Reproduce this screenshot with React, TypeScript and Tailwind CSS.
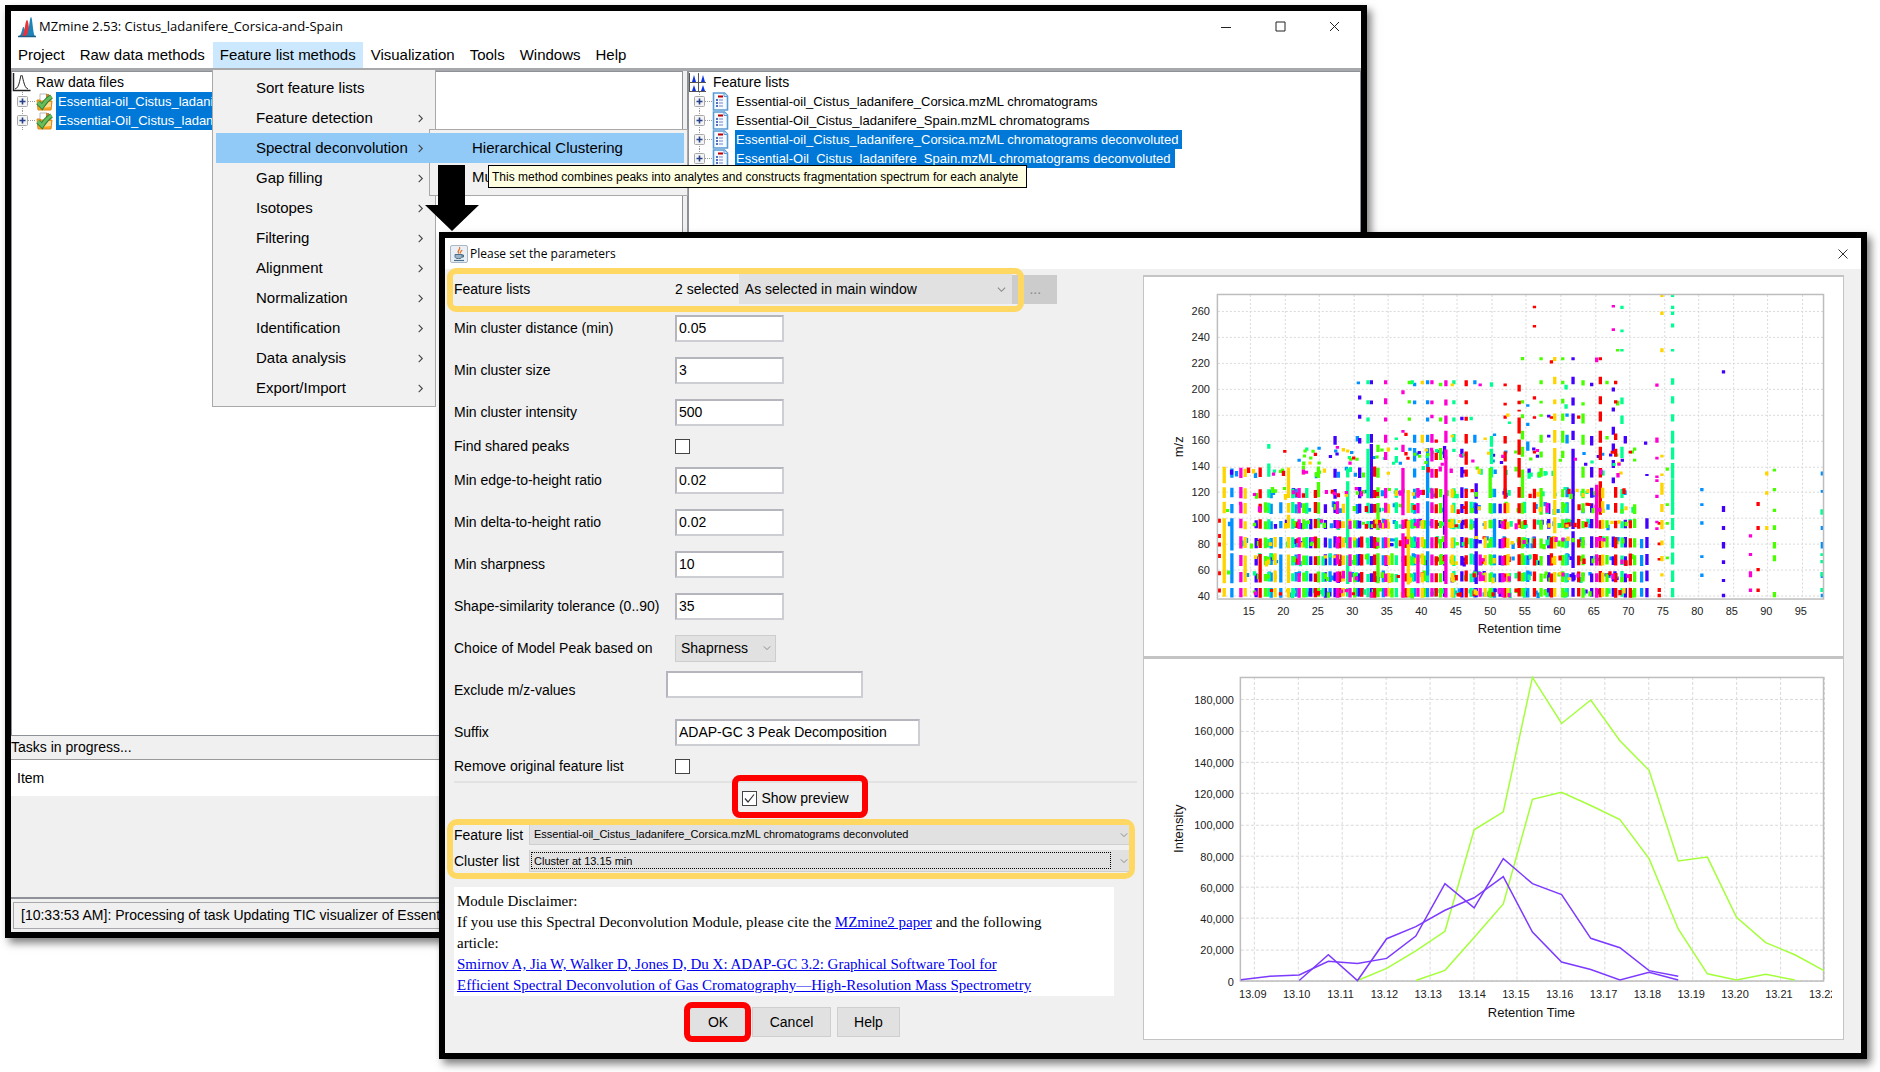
import React from "react";

/* ---------- shared bits ---------- */

const Chevron = ({ className = "" }: { className?: string }) => (
  <svg viewBox="0 0 10 10" className={className} fill="none" stroke="currentColor" strokeWidth="1.2" aria-hidden="true">
    <path d="M1 3l4 4 4-4" />
  </svg>
);

const Expander = () => (
  <svg width="20" height="19" viewBox="0 0 20 19" aria-hidden="true" className="shrink-0">
    <path d="M7.5 0v19M13 9.5h7" stroke="#9a9a9a" strokeDasharray="1 1" />
    <rect x="2.5" y="4.5" width="10" height="10" rx="1" fill="#f4f4f4" stroke="#a8a8a8" />
    <path d="M4.5 9.5h6M7.5 6.5v6" stroke="#27408b" strokeWidth="1.6" />
  </svg>
);

const RawFileIcon = () => (
  <svg width="19" height="18" viewBox="0 0 19 18" aria-hidden="true" className="shrink-0">
    <path d="M5 1h7l3 3v7H5z" fill="#fff" stroke="#b9b9b9" />
    <path d="M11 1h3v4h-3z" fill="#c9863a" />
    <path d="M2 7h3l1 1h11l-1 9H3z" fill="#f6a623" stroke="#d98a1e" />
    <path d="M4 9h12v5l-11 1z" fill="#ffd98a" />
    <path d="M3 9.500l4 4c2.500-4 5.500-7.500 9.500-10" fill="none" stroke="#2e7d32" strokeWidth="5" />
    <path d="M3 9.500l4 4c2.500-4 5.500-7.500 9.500-10" fill="none" stroke="#66bb5a" strokeWidth="3.200" />
  </svg>
);

const ListIcon = () => (
  <svg width="17" height="19" viewBox="0 0 17 19" aria-hidden="true" className="shrink-0">
    <path d="M1.500 1h11l3 3v14h-14z" fill="#f5faff" stroke="#5b9bd5" strokeWidth="1.600" />
    <path d="M12 1v3.500h3.500" fill="#d6e8fa" stroke="#5b9bd5" />
    <path d="M6 4.500h5" stroke="#c00000" strokeWidth="2" />
    <path d="M4 8h2M4 11h2M4 14h2" stroke="#1f3fa8" strokeWidth="1.600" />
    <path d="M7 8h4M7 11h4M7 14h4" stroke="#6f86c9" strokeWidth="1.200" />
  </svg>
);

/* ---------- main window ---------- */

const MENUS = ["Project", "Raw data methods", "Feature list methods", "Visualization", "Tools", "Windows", "Help"];

const METHODS = [
  "Sort feature lists",
  "Feature detection",
  "Spectral deconvolution",
  "Gap filling",
  "Isotopes",
  "Filtering",
  "Alignment",
  "Normalization",
  "Identification",
  "Data analysis",
  "Export/Import",
];

const RAW_FILES = ["Essential-oil_Cistus_ladanifere_Corsica.mzML", "Essential-Oil_Cistus_ladanifere_Spain.mzML"];

const FEATURE_LISTS = [
  { name: "Essential-oil_Cistus_ladanifere_Corsica.mzML chromatograms", selected: false },
  { name: "Essential-Oil_Cistus_ladanifere_Spain.mzML chromatograms", selected: false },
  { name: "Essential-oil_Cistus_ladanifere_Corsica.mzML chromatograms deconvoluted", selected: true },
  { name: "Essential-Oil_Cistus_ladanifere_Spain.mzML chromatograms deconvoluted", selected: true },
];

function MethodsMenu() {
  return (
    <div className="absolute left-[201px] top-[58px] z-10 w-[224px] border border-[#a9a9a9] bg-[#f1f1f1] pt-[3px] pb-[3px] text-[15px]">
      {METHODS.map((m) => {
        const active = m === "Spectral deconvolution";
        return (
          <div key={m} className={active ? "relative h-[30px] bg-[#91c9f7] ml-[3px]" : "relative h-[30px] ml-[3px]"}>
            <button type="button" className="flex h-full w-full items-center justify-between pl-[40px] pr-[10px] text-left">
              {m}
              {m !== "Sort feature lists" && <Chevron className="size-[9px] -rotate-90 text-[#444]" />}
            </button>
            {active && (
              <div className="absolute left-[213px] -top-[4px] w-[259px] border border-[#a9a9a9] bg-[#f1f1f1] py-[3px]">
                <div className="-ml-[2px] mr-[3px]">
                  <button type="button" className="flex h-[30px] w-full items-center bg-[#91c9f7] pl-[44px]">
                    Hierarchical Clustering
                  </button>
                  <button type="button" className="flex h-[29px] w-full items-center pl-[44px]">
                    <span className="w-[18px] overflow-hidden text-left">Multivariate</span>
                  </button>
                </div>
              </div>
            )}
          </div>
        );
      })}
    </div>
  );
}

function MainWindow() {
  return (
    <section
      aria-label="MZmine"
      className="absolute top-[5px] right-[513px] bottom-[134px] left-[5px] flex flex-col border-[6px] border-black bg-[#f0f0f0] shadow-[4px_5px_8px_rgba(0,0,0,0.5)]"
    >
      <header className="flex h-[31px] shrink-0 items-center bg-white pl-[7px]">
        <svg width="18" height="22" viewBox="0 0 18 22" aria-hidden="true">
          <path d="M1 20c3-1 3-9 4.500-9S7 19 9 20z" fill="#2c7fb5" />
          <path d="M4 20c3-1 3-16 5-16s2 15 4 16z" fill="#e8333a" />
          <path d="M8 20c3-1 3.500-19 5-19s2 18 4 19z" fill="#1b84b8" />
          <path d="M0 20.500h18" stroke="#1d5d86" strokeWidth="1.500" />
        </svg>
        <h1 className="ml-[3px] font-['Open_Sans','Noto_Sans',sans-serif] text-[13px]">MZmine 2.53: Cistus_ladanifere_Corsica-and-Spain</h1>
        <div className="ml-auto flex text-[#222]">
          <button type="button" aria-label="Minimize" className="grid h-[30px] w-[54px] place-items-center">
            <svg width="10" height="10" stroke="currentColor"><path d="M0 5.500h10" /></svg>
          </button>
          <button type="button" aria-label="Maximize" className="grid h-[30px] w-[54px] place-items-center">
            <svg width="11" height="11" stroke="currentColor" fill="none"><path d="M1 1h9v9H1z" /></svg>
          </button>
          <button type="button" aria-label="Close" className="grid h-[30px] w-[54px] place-items-center">
            <svg width="11" height="11" stroke="currentColor"><path d="M1 1l9 9M10 1l-9 9" /></svg>
          </button>
        </div>
      </header>

      <nav className="flex h-[26px] shrink-0 gap-px bg-white text-[15px]">
        {MENUS.map((m) => (
          <button
            key={m}
            type="button"
            className={m === "Feature list methods" ? "h-full bg-[#cce8ff] px-[7px]" : "h-full px-[7px]"}
          >
            {m}
          </button>
        ))}
      </nav>

      <div className="flex min-h-0 flex-1 border-t-[3px] border-[#a6a8ab]">
        <div className="w-[672px] shrink-0 border border-[#8e9197] bg-white">
          <div className="flex h-[20px] items-center gap-[5px] text-[14px]">
            <svg width="19" height="19" viewBox="0 0 19 19" aria-hidden="true" fill="none" stroke="#222">
              <path d="M1.500 0v17.500h17" strokeWidth="1.500" />
              <path d="M3 16c5-1 5-14 6.500-14s2 13 6.500 14" />
            </svg>
            Raw data files
          </div>
          {RAW_FILES.map((f) => (
            <div key={f} className="flex h-[19px] w-[201px] items-center pl-[3px] text-[13px]">
              <Expander />
              <RawFileIcon />
              <span className="ml-[2px] flex h-full min-w-0 items-center overflow-hidden bg-[#0078d7] pl-[2px] whitespace-nowrap text-white">{f}</span>
            </div>
          ))}
        </div>
        <div className="w-[4px] shrink-0" />
        <div className="min-w-0 flex-1 border border-l-2 border-[#8e9197] bg-white">
          <div className="flex h-[20px] items-center gap-[6px] text-[14px]">
            <svg width="18" height="19" viewBox="0 0 18 19" aria-hidden="true">
              <path d="M0 9.500h17M0 18.500h17M.5 0v19M9.500 0v19" stroke="#555" />
              <path d="M3 9l2-7 2 7zM12 9l2-7 2 7zM3 18l2-6 2 6zM12 18l2-6 2 6z" fill="#1033e0" />
            </svg>
            Feature lists
          </div>
          {FEATURE_LISTS.map((f) => (
            <div key={f.name} className="flex h-[19px] items-center pl-[3px] text-[13px]">
              <Expander />
              <ListIcon />
              <span
                className={
                  f.selected
                    ? "ml-[6px] flex h-full items-center bg-[#0078d7] pl-px pr-[4px] whitespace-nowrap text-white"
                    : "ml-[6px] flex h-full items-center pl-px whitespace-nowrap"
                }
              >
                {f.name}
              </span>
            </div>
          ))}
        </div>
      </div>

      <p className="flex h-[24px] shrink-0 items-center border-b border-[#9a9a9a] text-[14px]">Tasks in progress...</p>
      <table className="w-full shrink-0 text-[14px]">
        <thead>
          <tr className="h-[36px] bg-white text-left">
            <th className="pl-[6px] font-normal">Item</th>
          </tr>
        </thead>
      </table>
      <div className="h-[101px] shrink-0" />
      <div className="shrink-0 border-t-2 border-[#8e9197] px-[2px] pt-[3px] pb-[3px]">
        <p className="flex h-[27px] items-center overflow-hidden border border-[#a6a8ab] pl-[7px] text-[14px] whitespace-nowrap">
          [10:33:53 AM]: Processing of task Updating TIC visualizer of Essential-oil
        </p>
      </div>

      <MethodsMenu />
      <div
        role="tooltip"
        className="absolute left-[477px] top-[154px] z-20 flex h-[23px] w-[539px] items-center border border-black bg-[#ffffe1] pl-[3px] text-[12px] whitespace-nowrap"
      >
        This method combines peaks into analytes and constructs fragmentation spectrum for each analyte
      </div>
    </section>
  );
}

/* ---------- retention time / m/z scatter ---------- */

const Y = "#ffd500";
const B = "#0090ff";
const M = "#ff00d4";
const R = "#ff0000";
const G = "#48ff00";
const T = "#00ff90";
const I = "#4400ff";
const COLORS = [Y, B, M, G, T, I, G, R, T, B];

// Fragment bands, bottom to top, in thirds of a pixel from the plot's top edge.
const BANDS = [
  [880, 910], [828, 864], [776, 814], [724, 762], [671, 704], [620, 658], [576, 612], [514, 550],
];

// Column: x, colour, number of bands filled, further [top, bottom] runs.
type Column = [number, string, number, number[][]];
const COLUMNS: Column[] = [
  [19, Y, 8, [[671, 866], [516, 566]]],
  [42, B, 8, [[671, 768], [776, 866]]],
  [69, M, 8, []], [82, Y, 8, [[790, 860]]], [115, I, 5, []],
  [127, R, 8, [[778, 864]]], [143, G, 6, []], [153, T, 8, [[448, 462], [506, 535]]],
  [160, B, 7, []], [172, Y, 4, []], [189, B, 6, [[780, 864]]], [212, Y, 8, [[524, 600], [660, 700], [780, 865]]],
  [225, T, 7, []], [235, B, 7, []], [244, M, 7, []], [258, G, 6, [[500, 512]]], [267, T, 7, [[458, 468]]],
  [279, I, 5, []], [293, R, 7, [[474, 484]]], [302, G, 8, [[562, 600]]], [316, T, 3, []],
  [323, I, 6, []], [337, B, 4, []], [352, I, 8, [[424, 450]]], [359, M, 6, [[454, 462]]],
  [366, R, 5, []], [377, Y, 6, [[460, 470]]], [390, T, 8, [[560, 740], [790, 868]]],
  [397, M, 5, [[500, 510]]], [411, G, 5, []], [419, B, 6, [[424, 440]]], [422, B, 0, [[260, 268]]],
  [426, I, 8, [[302, 314], [360, 372], [430, 446]]], [432, R, 4, []],
  [451, T, 8, [[256, 268], [316, 328], [368, 380], [418, 446], [462, 592]]],
  [461, I, 8, [[256, 268], [317, 328], [418, 444], [448, 532], [540, 610]]],
  [471, R, 8, []], [481, G, 8, [[450, 472], [650, 706], [780, 866]]],
  [497, B, 5, []], [504, M, 7, [[256, 268], [310, 328], [368, 380], [420, 444], [472, 496]]],
  [512, Y, 6, [[458, 470]]], [523, G, 3, []], [536, T, 7, [[428, 436], [484, 504], [458, 466]]],
  [556, M, 8, [[286, 298], [406, 414], [450, 472], [546, 662], [716, 910]]],
  [565, R, 5, [[414, 424], [472, 482]]], [572, Y, 7, [[586, 650], [690, 870]]],
  [575, G, 5, [[258, 268], [316, 326], [368, 378]]], [584, T, 6, [[256, 268]]],
  [591, B, 8, [[264, 274], [317, 328], [420, 444], [460, 500]]], [601, M, 7, [[780, 866]]],
  [614, Y, 5, [[258, 268], [420, 444]]], [620, G, 5, []],
  [630, B, 8, [[256, 268], [316, 328], [368, 380], [420, 442], [460, 600], [620, 760], [770, 840]]],
  [643, M, 8, [[256, 268], [317, 328], [360, 370], [418, 444], [466, 500]]],
  [656, R, 8, [[434, 444], [474, 496]]], [669, G, 7, [[264, 274], [368, 380], [460, 496]]],
  [681, I, 6, [[454, 490], [600, 720]]],
  [685, M, 8, [[256, 274], [314, 332], [362, 388], [408, 444], [464, 600], [600, 760], [780, 868]]],
  [704, Y, 7, [[266, 274], [420, 428]]], [709, T, 7, [[256, 268], [316, 328], [368, 380], [418, 442], [462, 472]]],
  [733, I, 8, [[366, 376], [462, 488]]], [746, R, 8, [[256, 274], [316, 328], [366, 378], [418, 446], [470, 510]]],
  [761, T, 6, [[366, 376]]], [772, B, 6, [[256, 268], [420, 444]]],
  [776, I, 7, [[566, 612], [671, 760], [770, 868]]], [788, M, 3, [[266, 274]]],
  [803, Y, 5, [[428, 436]]], [818, G, 7, [[520, 590]]], [822, T, 8, [[262, 276], [424, 456], [462, 508]]],
  [831, B, 7, [[416, 424], [680, 740]]], [848, I, 6, []], [856, M, 5, [[480, 490]]],
  [863, R, 8, [[266, 274], [324, 332], [362, 372], [424, 446], [470, 500], [512, 612]]],
  [871, Y, 6, [[356, 366]]], [876, T, 2, [[380, 388]]], [905, R, 8, [[270, 290], [318, 328], [345, 350], [368, 416], [434, 480], [490, 546]]],
  [915, G, 7, [[186, 196], [316, 326], [358, 370], [408, 434], [456, 486], [524, 610]]],
  [921, T, 6, []], [931, B, 4, [[328, 336], [384, 394], [440, 468]]],
  [951, R, 7, [[32, 40], [90, 98], [304, 314], [364, 372], [468, 476]]],
  [971, G, 8, [[187, 196], [256, 268], [318, 326], [358, 366], [420, 444], [470, 488], [580, 660], [690, 705]]],
  [994, I, 6, [[360, 368], [420, 428]]], [1002, R, 4, [[196, 206], [364, 372]]],
  [1012, Y, 8, [[186, 198], [246, 268], [314, 328], [356, 378], [406, 444], [460, 612], [616, 660], [668, 716], [724, 762]]],
  [1036, G, 7, [[187, 196], [258, 268], [312, 326], [356, 378], [408, 444], [468, 490]]],
  [1046, T, 6, [[270, 284], [328, 342]]], [1049, B, 7, [[356, 366], [420, 446]]],
  [1067, I, 8, [[187, 196], [246, 268], [308, 332], [356, 388], [408, 436], [462, 700], [710, 820]]],
  [1084, R, 5, [[362, 372]]], [1097, G, 8, [[256, 272], [322, 332], [356, 386], [420, 450]]],
  [1123, I, 8, [[264, 274], [424, 452]]], [1138, M, 7, [[188, 202], [570, 626], [640, 680]]],
  [1149, R, 8, [[187, 196], [246, 268], [304, 328], [350, 380], [408, 444], [456, 496], [560, 660]]],
  [1156, Y, 7, []], [1169, G, 5, [[258, 268], [424, 434]]],
  [1188, I, 4, [[278, 290], [338, 350], [396, 420], [446, 470], [496, 520], [548, 566]]],
  [1195, R, 7, [[258, 268], [316, 326], [416, 436], [462, 486]]],
  [1188, M, 0, [[30, 38], [100, 108]]], [1214, T, 7, [[32, 42], [104, 112], [162, 170], [308, 328], [362, 388], [456, 490]]],
  [1201, G, 0, [[162, 170], [318, 332]]], [1224, I, 5, [[424, 446]]], [1239, R, 5, [[468, 476]]],
  [1252, G, 6, [[458, 468], [492, 500]]], [1273, B, 4, []], [1289, I, 5, [[538, 544]]], [1285, I, 0, [[440, 450]]],
  [1319, M, 0, [[266, 276], [428, 444], [486, 494], [542, 550], [554, 562], [600, 610], [678, 686], [698, 706]]],
  [1326, R, 0, [[682, 690], [744, 752], [790, 798], [880, 892], [898, 908]]],
  [1334, Y, 0, [[0, 6], [50, 60], [160, 172], [480, 488], [536, 544], [564, 600], [628, 652], [676, 704], [738, 752], [784, 800], [836, 846]]],
  [1350, G, 0, [[518, 528], [626, 634], [682, 690], [786, 794]]],
  [1366, T, 0, [[0, 6], [32, 42], [50, 60], [86, 98], [162, 170], [250, 270], [304, 326], [358, 380], [408, 446], [458, 494], [505, 552], [554, 660], [670, 706], [724, 762], [774, 810], [828, 862], [880, 908]]],
  [1454, B, 0, [[580, 590], [626, 634], [680, 690], [782, 790], [837, 847]]],
  [1519, I, 0, [[226, 236], [634, 652], [694, 706], [742, 762], [797, 808], [853, 862], [898, 908]]],
  [1600, M, 0, [[719, 729], [775, 784], [830, 848], [882, 892]]],
  [1623, R, 0, [[622, 634], [694, 706], [820, 830], [882, 892]]],
  [1649, Y, 0, [[530, 542], [590, 600], [694, 706]]],
  [1672, G, 0, [[522, 530], [580, 590], [642, 652], [692, 706], [742, 762], [782, 800], [892, 908]]],
  [1816, B, 0, [[530, 542], [586, 594], [694, 706], [742, 762], [840, 850], [898, 908]]],
  [1815, T, 0, [[644, 660], [776, 784], [796, 806], [832, 846], [880, 892]]],
];

function buildScatter() {
  let seed = 20177;
  const rnd = () => {
    seed = (seed * 16807) % 2147483647;
    return seed / 2147483647;
  };
  const runs: Record<string, string> = {};
  const add = (c: string, x: number, y1: number, y2: number) => {
    runs[c] = `${runs[c] ?? ""}M${x} ${Math.round(y1)}V${Math.round(y2)}`;
  };
  // minor fragments scattered between the main columns
  for (let i = 0; i < 640; i++) {
    const x = 20 + Math.round((rnd() * 1230) / 3) * 3;
    const k = Math.floor(rnd() * 7.600);
    const [a, b] = BANDS[k];
    const y = a + rnd() * (b - a - 14);
    const c = COLORS[Math.floor(rnd() * COLORS.length)];
    if (x < 110 && rnd() < 0.7) continue;
    add(c, x, y, y + 9 + rnd() * 9);
  }
  for (let i = 0; i < 70; i++) {
    const x = 240 + Math.round(rnd() * 1010);
    const y = 455 + rnd() * 50;
    add(COLORS[Math.floor(rnd() * COLORS.length)], x, y, y + 9);
  }
  for (const [x, c, n, extra] of COLUMNS) {
    BANDS.slice(0, n).forEach(([a, b], k) => {
      const cut = k === 0 ? 0 : rnd() * 10;
      add(c, x, a + cut, b - rnd() * 4);
    });
    extra.forEach(([a, b]) => add(c, x, a, b));
  }
  [672, 718, 744, 778, 830, 882].forEach((y) => add(R, 4, y, y + 12));
  add(R, 201, 466, 474);
  return runs;
}

const SCATTER = buildScatter();

function ScatterChart() {
  const xt = Array.from({ length: 17 }, (_, i) => ({ v: 15 + i * 5, x: 106 + i * 34.55 }));
  const yt = Array.from({ length: 12 }, (_, i) => ({ v: 40 + i * 20, y: 320 - i * 25.9 }));
  return (
    <svg viewBox="0 1 700 380" className="block h-auto w-full font-['Liberation_Sans',Arial,sans-serif]" role="img" aria-label="m/z over retention time">
      <g stroke="#d9d9d9" strokeDasharray="2 2">
        {xt.map((t) => <path key={t.v} d={`M${Math.round(t.x)}.5 19v304`} />)}
        {yt.map((t) => <path key={t.v} d={`M74 ${Math.round(t.y)}.5h607`} />)}
      </g>
      <g transform="translate(74 19) scale(0.33333)" strokeWidth="10" fill="none">
        {Object.entries(SCATTER).map(([c, d]) => <path key={c} d={d} stroke={c} />)}
      </g>
      <rect x="73.500" y="18.500" width="607" height="305" fill="none" stroke="#bdbdbd" strokeWidth="1.500" />
      <g fontSize="11" fill="#222">
        {xt.map((t) => <text key={t.v} x={t.x - 1} y="339" textAnchor="middle">{t.v}</text>)}
        {yt.map((t) => <text key={t.v} x="66" y={t.y + 4} textAnchor="end">{t.v}</text>)}
      </g>
      <g fontSize="13" fill="#111">
        <text x="376" y="358" textAnchor="middle">Retention time</text>
        <text transform="translate(39 171) rotate(-90)" textAnchor="middle">m/z</text>
      </g>
    </svg>
  );
}

/* ---------- intensity chart ---------- */

const TRACES = [
  { c: "#a4ff3a", start: 4, v: [0, 7.8, 19, 31.5, 96.5, 108, 194, 164.5, 179.5, 153.5, 134.5, 76.5, 79, 40.5, 24.3, 16.5, 6.3] },
  { c: "#a4ff3a", start: 6, v: [0, 6.5, 27.5, 49, 116, 120.5, 112, 103, 78, 33, 4.3, 0.3, 4, 0.3] },
  { c: "#7c3aff", start: 0, v: [0.5, 2.8, 3.6, 12.3, 10.9, 14.2, 28.5, 62, 46.5, 78, 62, 55, 27, 21, 6.3, 2.8] },
  { c: "#7c3aff", start: 2, v: [0, 16.5, 0, 26.8, 34.5, 45, 53, 66.5, 31, 11.8, 7, 0.3, 5.3, 0.3] },
];

function IntensityChart() {
  const xt = Array.from({ length: 14 }, (_, i) => ({ v: (13.09 + i * 0.01).toFixed(2), x: 110 + i * 43.9 }));
  const yt = Array.from({ length: 10 }, (_, i) => ({ v: (i * 20000).toLocaleString("en-US"), y: 324 - i * 31.3 }));
  return (
    <svg viewBox="0 2 700 380" className="block h-auto w-full font-['Liberation_Sans',Arial,sans-serif]" role="img" aria-label="Intensity over retention time">
      <clipPath id="axis-labels"><path d="M0 0h689v380H0z" /></clipPath>
      <g stroke="#d9d9d9" strokeDasharray="3 2">
        {xt.map((t) => <path key={t.v} d={`M${Math.round(t.x)}.5 20v304`} />)}
        {yt.map((t) => <path key={t.v} d={`M97 ${Math.round(t.y)}.5h584`} />)}
      </g>
      <rect x="96.500" y="20.500" width="584" height="304" fill="none" stroke="#bdbdbd" strokeWidth="1.500" />
      {TRACES.map((t, k) => (
        <polyline
          key={k}
          fill="none"
          stroke={t.c}
          strokeWidth="1.500"
          points={t.v.map((v, i) => `${(97 + (t.start + i) * 29.2).toFixed(1)},${(324 - v * 1.565).toFixed(1)}`).join(" ")}
        />
      ))}
      <g fontSize="11" fill="#222" clipPath="url(#axis-labels)">
        {xt.map((t) => <text key={t.v} x={t.x - 1} y="341" textAnchor="middle">{t.v}</text>)}
        {yt.map((t) => <text key={t.v} x="90" y={t.y + 5} textAnchor="end">{t.v}</text>)}
      </g>
      <g fontSize="13" fill="#111">
        <text x="388" y="361" textAnchor="middle">Retention Time</text>
        <text transform="translate(39 172) rotate(-90)" textAnchor="middle">Intensity</text>
      </g>
    </svg>
  );
}

/* ---------- parameter dialog ---------- */

function Row({ id, label, height = "h-[42px]", children }: { id: string; label: string; height?: string; children: React.ReactNode }) {
  return (
    <div className={`flex items-center ${height}`}>
      <label htmlFor={id} className="w-[221px] shrink-0">{label}</label>
      {children}
    </div>
  );
}

const FIELD = "h-[27px] border-2 border-t-[#b5b5bd] border-l-[#b5b5bd] border-r-[#cdcdd4] border-b-[#cdcdd4] bg-white px-[2px]";

function NumberRow({ id, label, value }: { id: string; label: string; value: string }) {
  return (
    <Row id={id} label={label}>
      <input id={id} type="text" defaultValue={value} className={`${FIELD} w-[109px]`} />
    </Row>
  );
}

function Check({ id, checked = false }: { id: string; checked?: boolean }) {
  return (
    <span className="relative block size-[15px]">
      <input id={id} type="checkbox" defaultChecked={checked} className="block size-[15px] appearance-none border border-[#444] bg-white" />
      {checked && (
        <svg viewBox="0 0 15 15" className="pointer-events-none absolute inset-0" fill="none" stroke="#333" strokeWidth="1.200" aria-hidden="true">
          <path d="M3 7.500l3 3.500 6-7.500" />
        </svg>
      )}
    </span>
  );
}

function ParameterDialog() {
  return (
    <section
      role="dialog"
      aria-label="Please set the parameters"
      className="absolute top-[232px] right-[13px] left-[439px] z-30 border-[6px] border-black bg-[#f0f0f0] shadow-[4px_5px_8px_rgba(0,0,0,0.5)]"
    >
      <header className="flex h-[31px] items-center bg-white pl-[5px]">
        <svg width="18" height="18" viewBox="0 0 18 18" aria-hidden="true">
          <rect x=".5" y=".5" width="17" height="17" rx="1.500" fill="#e9eff4" stroke="#a9b8c4" />
          <path d="M9 8.500C6 6 11 5 9.500 2M10.500 8.500c-1-1.500 1-2 1.500-3.500" stroke="#e8762c" strokeWidth="1.300" fill="none" />
          <path d="M5 9.500h7v2c0 1.500-1 2-3.500 2S5 13 5 11.500zM12 10h1.500v2H12" fill="#9db4c6" stroke="#4a6f8c" />
          <path d="M4 15.500h10" stroke="#4a6f8c" strokeWidth="1.200" />
        </svg>
        <h2 className="ml-[2px] font-['Open_Sans','Noto_Sans',sans-serif] text-[12px]">Please set the parameters</h2>
        <button type="button" aria-label="Close" className="ml-auto grid h-full w-[36px] place-items-center text-[#333]">
          <svg width="10" height="10" stroke="currentColor"><path d="M.5.5l9 9M9.500.5l-9 9" /></svg>
        </button>
      </header>

      <div className="flex text-[14px]">
        <form className="w-[698px] shrink-0 pr-[6px] pb-[16px] pl-[9px]" onSubmit={(e) => e.preventDefault()}>
          <div className="relative h-[38px] pt-[5px]">
            <div className="flex items-center">
              <label htmlFor="lists" className="w-[221px]">Feature lists</label>
              <span>2 selected</span>
              <span className="relative">
                <select id="lists" className="h-[30px] w-[273px] appearance-none bg-[#e1e1e1] pl-[6px]">
                  <option>As selected in main window</option>
                </select>
                <Chevron className="pointer-events-none absolute top-[11px] right-[6px] size-[9px] text-[#888]" />
              </span>
              <button type="button" aria-label="Choose lists" className="h-[29px] w-[45px] bg-[#cccccc] pl-[2px] text-[#888]">...</button>
            </div>
            <div className="pointer-events-none absolute -top-px -left-[7px] h-[44px] w-[577px] rounded-[9px] border-[6px] border-[#ffd863]" />
          </div>

          <NumberRow id="dist" label="Min cluster distance (min)" value="0.05" />
          <NumberRow id="size" label="Min cluster size" value="3" />
          <NumberRow id="intensity" label="Min cluster intensity" value="500" />
          <Row id="shared" label="Find shared peaks" height="h-[26px]"><Check id="shared" /></Row>
          <NumberRow id="edge" label="Min edge-to-height ratio" value="0.02" />
          <NumberRow id="delta" label="Min delta-to-height ratio" value="0.02" />
          <NumberRow id="sharp" label="Min sharpness" value="10" />
          <NumberRow id="shape" label="Shape-similarity tolerance (0..90)" value="35" />
          <Row id="model" label="Choice of Model Peak based on">
            <span className="relative">
              <select id="model" className="h-[27px] w-[101px] appearance-none border border-[#cdcdcd] bg-[#e1e1e1] pl-[5px]">
                <option>Shaprness</option>
              </select>
              <Chevron className="pointer-events-none absolute top-[9px] right-[5px] size-[8px] text-[#888]" />
            </span>
          </Row>
          <Row id="exclude" label="Exclude m/z-values">
            <input id="exclude" type="text" className={`${FIELD} -ml-[9px] mb-[12px] w-[197px]`} />
          </Row>
          <Row id="suffix" label="Suffix">
            <input id="suffix" type="text" defaultValue="ADAP-GC 3 Peak Decomposition" className={`${FIELD} w-[245px]`} />
          </Row>
          <Row id="remove" label="Remove original feature list" height="h-[26px]"><Check id="remove" /></Row>

          <div className="mt-[2px] flex justify-center border-t-2 border-[#e2e2e2] pt-[6px] pb-[10px]">
            <div className="relative flex h-[19px] items-center gap-[4px]">
              <Check id="preview" checked />
              <label htmlFor="preview">Show preview</label>
              <div className="pointer-events-none absolute -top-[14px] -right-[19px] -bottom-[10px] -left-[10px] rounded-[8px] border-[6px] border-[#fe0000]" />
            </div>
          </div>

          <div className="relative mt-[1px] mr-[2px] -ml-[7px] h-[60px] rounded-[10px] border-[6px] border-[#ffd863] pl-px">
            <div className="flex h-[20px] items-center">
              <label htmlFor="flist" className="w-[75px] shrink-0">Feature list</label>
              <span className="relative flex-1">
                <select id="flist" className="block h-[20px] w-full appearance-none border-b border-l border-[#cfcfcf] bg-[#e1e1e1] pl-[4px] text-[11px]">
                  <option>Essential-oil_Cistus_ladanifere_Corsica.mzML chromatograms deconvoluted</option>
                </select>
                <Chevron className="pointer-events-none absolute top-[6px] right-px size-[8px] text-[#888]" />
              </span>
            </div>
            <div className="mt-[5px] flex h-[22px] items-center">
              <label htmlFor="clist" className="w-[75px] shrink-0">Cluster list</label>
              <span className="relative flex flex-1 border-b border-l border-[#cfcfcf] bg-[#e1e1e1] py-[2px] pr-[18px] pl-px">
                <select id="clist" className="block h-[17px] w-full appearance-none border border-dotted border-black bg-[#e1e1e1] pl-[2px] text-[11px]">
                  <option>Cluster at 13.15 min</option>
                </select>
                <Chevron className="pointer-events-none absolute top-[7px] right-px size-[8px] text-[#888]" />
              </span>
            </div>
          </div>

          <div className="mt-[8px] w-[660px] bg-white pt-[4px] pl-[3px] font-['Liberation_Serif','Times_New_Roman',serif] text-[15px] leading-[21px]">
            <p>Module Disclaimer:</p>
            <p>
              If you use this Spectral Deconvolution Module, please cite the{" "}
              <a href="#mzmine2" className="text-[#0000ee] underline">MZmine2 paper</a> and the following
              <br />
              article:
            </p>
            <a href="#adap" className="text-[#0000ee] underline">
              Smirnov A, Jia W, Walker D, Jones D, Du X: ADAP-GC 3.2: Graphical Software Tool for
              <br />
              Efficient Spectral Deconvolution of Gas Cromatography—High-Resolution Mass Spectrometry
            </a>
          </div>

          <div className="mt-[11px] ml-[236px] flex gap-[6px]">
            <div className="relative">
              <button type="submit" className="h-[30px] w-[56px] bg-[#e1e1e1]">OK</button>
              <div className="pointer-events-none absolute -top-[5px] -right-[5px] -bottom-[5px] -left-[6px] rounded-[8px] border-[6px] border-[#fe0000]" />
            </div>
            <button type="button" className="h-[30px] w-[79px] border border-[#cfcfcf] bg-[#e1e1e1]">Cancel</button>
            <button type="button" className="h-[30px] w-[63px] border border-[#cfcfcf] bg-[#e1e1e1]">Help</button>
          </div>
        </form>

        <div className="flex min-w-0 flex-1 flex-col pt-[6px] pr-[17px]">
          <div className="border border-t-2 border-[#c4c4c4] bg-white"><ScatterChart /></div>
          <div className="border border-t-2 border-[#c4c4c4] bg-white"><IntensityChart /></div>
        </div>
      </div>
    </section>
  );
}

export default function App() {
  return (
    <main className="relative min-h-screen overflow-hidden bg-white font-['Liberation_Sans',Arial,sans-serif] text-black">
      <MainWindow />
      <svg viewBox="0 0 54 66" width="54" height="66" className="absolute top-[165px] left-[425px] z-30" aria-hidden="true">
        <path d="M13 0h27v40h14L27 66 0 40h13z" fill="#000" />
      </svg>
      <ParameterDialog />
    </main>
  );
}
